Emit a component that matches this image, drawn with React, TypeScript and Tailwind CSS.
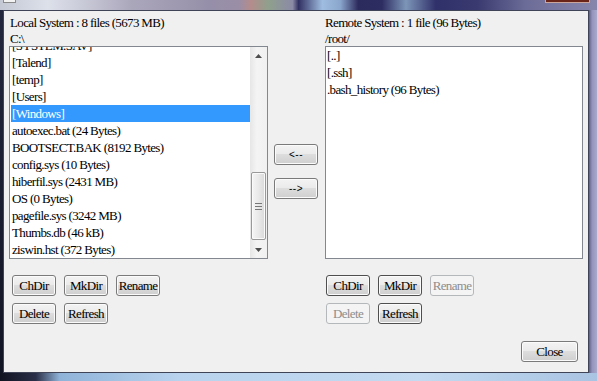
import React from "react";

// Types
type BtnProps = { label: string; disabled?: boolean; dark?: boolean; wide?: boolean; sans?: boolean };

const serif = "font-['Liberation_Serif','Times_New_Roman',serif] text-[13px] tracking-[-0.65px]";

const localItems = [
    "[SYSTEM.SAV]",
    "[Talend]",
    "[temp]",
    "[Users]",
    "[Windows]",
    "autoexec.bat (24 Bytes)",
    "BOOTSECT.BAK (8192 Bytes)",
    "config.sys (10 Bytes)",
    "hiberfil.sys (2431 MB)",
    "OS (0 Bytes)",
    "pagefile.sys (3242 MB)",
    "Thumbs.db (46 kB)",
    "ziswin.hst (372 Bytes)",
];

const remoteItems = ["[..]", "[.ssh]", ".bash_history (96 Bytes)"];

const Btn = ({ label, disabled, dark, wide, sans }: BtnProps) => (
    <div
        className={`${wide ? "w-[57px]" : "w-[44px]"} h-[21px] rounded-[3px] border flex items-center justify-center leading-none ${
            sans ? "font-['Liberation_Sans',sans-serif] text-[10px] tracking-[0.5px]" : serif
        } ${
            disabled
                ? "border-[#b5b8bb] bg-[#f4f4f4] text-[#8d8d8d]"
                : `${dark ? "border-[#4f4f4f]" : "border-[#7a7a7a]"} text-black bg-[linear-gradient(#f3f3f3,#ebebeb_45%,#dddddd_50%,#cfcfcf)] shadow-[inset_0_0_0_1px_#fbfbfb]`
        }`}
    >
        {label}
    </div>
);

const Arrow = ({ up }: { up?: boolean }) => (
    <div className="h-[17px] flex items-center justify-center">
        <svg width="7" height="4" viewBox="0 0 7 4">
            {up ? <path d="M0 4 L3.5 0 L7 4 Z" fill="#4d4d4d" /> : <path d="M0 0 L3.5 4 L7 0 Z" fill="#4d4d4d" />}
        </svg>
    </div>
);

const ScrollBar = () => (
    <div className="w-[17px] flex flex-col bg-[linear-gradient(to_right,#e6e6e6,#f4f4f4_40%,#f0f0f0)]">
        <Arrow up />
        <div className="flex-1 pt-[108px] px-[1px]">
            <div className="h-[68px] rounded-[2px] border border-[#999] bg-[linear-gradient(to_right,#f5f5f5,#e9e9e9_50%,#d9d9d9)] shadow-[inset_0_0_0_1px_#fafafa] flex flex-col items-center justify-center gap-[2px]">
                <div className="w-[7px] h-[1px] bg-[#777]" />
                <div className="w-[7px] h-[1px] bg-[#777]" />
                <div className="w-[7px] h-[1px] bg-[#777]" />
            </div>
        </div>
        <Arrow />
    </div>
);

const App = () => {
    return (
        <div className={`w-[597px] h-[381px] flex flex-col bg-[#1b1f33] overflow-hidden ${serif}`}>
            {/* Title strip (glass) */}
            <div className="h-[10px] flex bg-[linear-gradient(to_right,#c3c8d4_0%,#dde1ea_8%,#c9cad8_14%,#aba7bb_22%,#968fa9_35%,#9a8ea6_40%,#b48c8c_42%,#8fa08c_45%,#8b8aa6_49%,#313062_50%,#9fbde0_54%,#8aa6cc_57%,#2c2b5d_60%,#2e2d62_64%,#7d96b8_68%,#30306a_73%,#3a3a70_80%,#6c6c98_88%,#8686ac_100%)]">
                <div className="ml-[3px] w-[13px] h-[3px] bg-[#f2f2f2] border border-t-0 border-[#8a8a8a]" />
                <div className="flex-1" />
                <div className="w-[45px] h-[3px] bg-[#6b2518] border border-t-0 border-[#c9a59c] mr-[7px]" />
            </div>

            <div className="flex-1 flex">
                <div className="w-[3px] bg-[linear-gradient(#23273e,#121524)]" />

                {/* Client area */}
                <div className="w-[586px] bg-[#f0f0f0] border border-[#3f4456] flex pl-[5px] pt-[3px]">
                    {/* Local */}
                    <div className="w-[259px] flex flex-col">
                        <div className="h-[17px] leading-[17px] pl-[1px]">Local System : 8 files (5673 MB)</div>
                        <div className="h-[15px] leading-[15px] pl-[1px]">C:\</div>
                        <div className="h-[213px] border border-[#828790] bg-white flex">
                            <div className="flex-1 overflow-hidden">
                                <div className="-mt-[10px]">
                                    {localItems.map((item) => (
                                        <div
                                            key={item}
                                            className={`h-[17px] leading-[17px] ml-[1px] pl-[1px] whitespace-nowrap ${
                                                item === "[Windows]" ? "bg-[#3399ff] text-white" : "text-black"
                                            }`}
                                        >
                                            {item}
                                        </div>
                                    ))}
                                </div>
                            </div>
                            <ScrollBar />
                        </div>
                        <div className="mt-[16px] pl-[3px] flex flex-col gap-[7px]">
                            <div className="flex gap-[8px]">
                                <Btn label="ChDir" />
                                <Btn label="MkDir" />
                                <Btn label="Rename" />
                            </div>
                            <div className="flex gap-[8px]">
                                <Btn label="Delete" />
                                <Btn label="Refresh" />
                            </div>
                        </div>
                    </div>

                    {/* Transfer */}
                    <div className="w-[57px] pl-[6px] pt-[130px] flex flex-col gap-[13px]">
                        <Btn label="<--" sans />
                        <Btn label="-->" sans />
                    </div>

                    {/* Remote */}
                    <div className="w-[258px] flex flex-col">
                        <div className="h-[17px] leading-[17px]">Remote System : 1 file (96 Bytes)</div>
                        <div className="h-[15px] leading-[15px]">/root/</div>
                        <div className="h-[213px] border border-[#828790] bg-white">
                            {remoteItems.map((item) => (
                                <div key={item} className="h-[17px] leading-[17px] pl-[1px] whitespace-nowrap">
                                    {item}
                                </div>
                            ))}
                        </div>
                        <div className="mt-[16px] pl-[1px] flex flex-col gap-[7px]">
                            <div className="flex gap-[8px]">
                                <Btn label="ChDir" dark />
                                <Btn label="MkDir" dark />
                                <Btn label="Rename" disabled />
                            </div>
                            <div className="flex gap-[8px]">
                                <Btn label="Delete" disabled />
                                <Btn label="Refresh" dark />
                            </div>
                        </div>
                        <div className="mt-[17px] pr-[5px] flex justify-end">
                            <Btn label="Close" wide />
                        </div>
                    </div>
                </div>

                <div className="flex-1 bg-[linear-gradient(to_right,#5f5f88,#9494bc_40%,#a9a9cc)]" />
            </div>

            {/* Bottom frame */}
            <div className="h-[8px] bg-[linear-gradient(to_right,#101320_0%,#2a2f48_6%,#8fb3d8_10%,#b9d3ee_30%,#c3daf0_70%,#a9c3e2_100%)]" />
        </div>
    );
};

export default App;
